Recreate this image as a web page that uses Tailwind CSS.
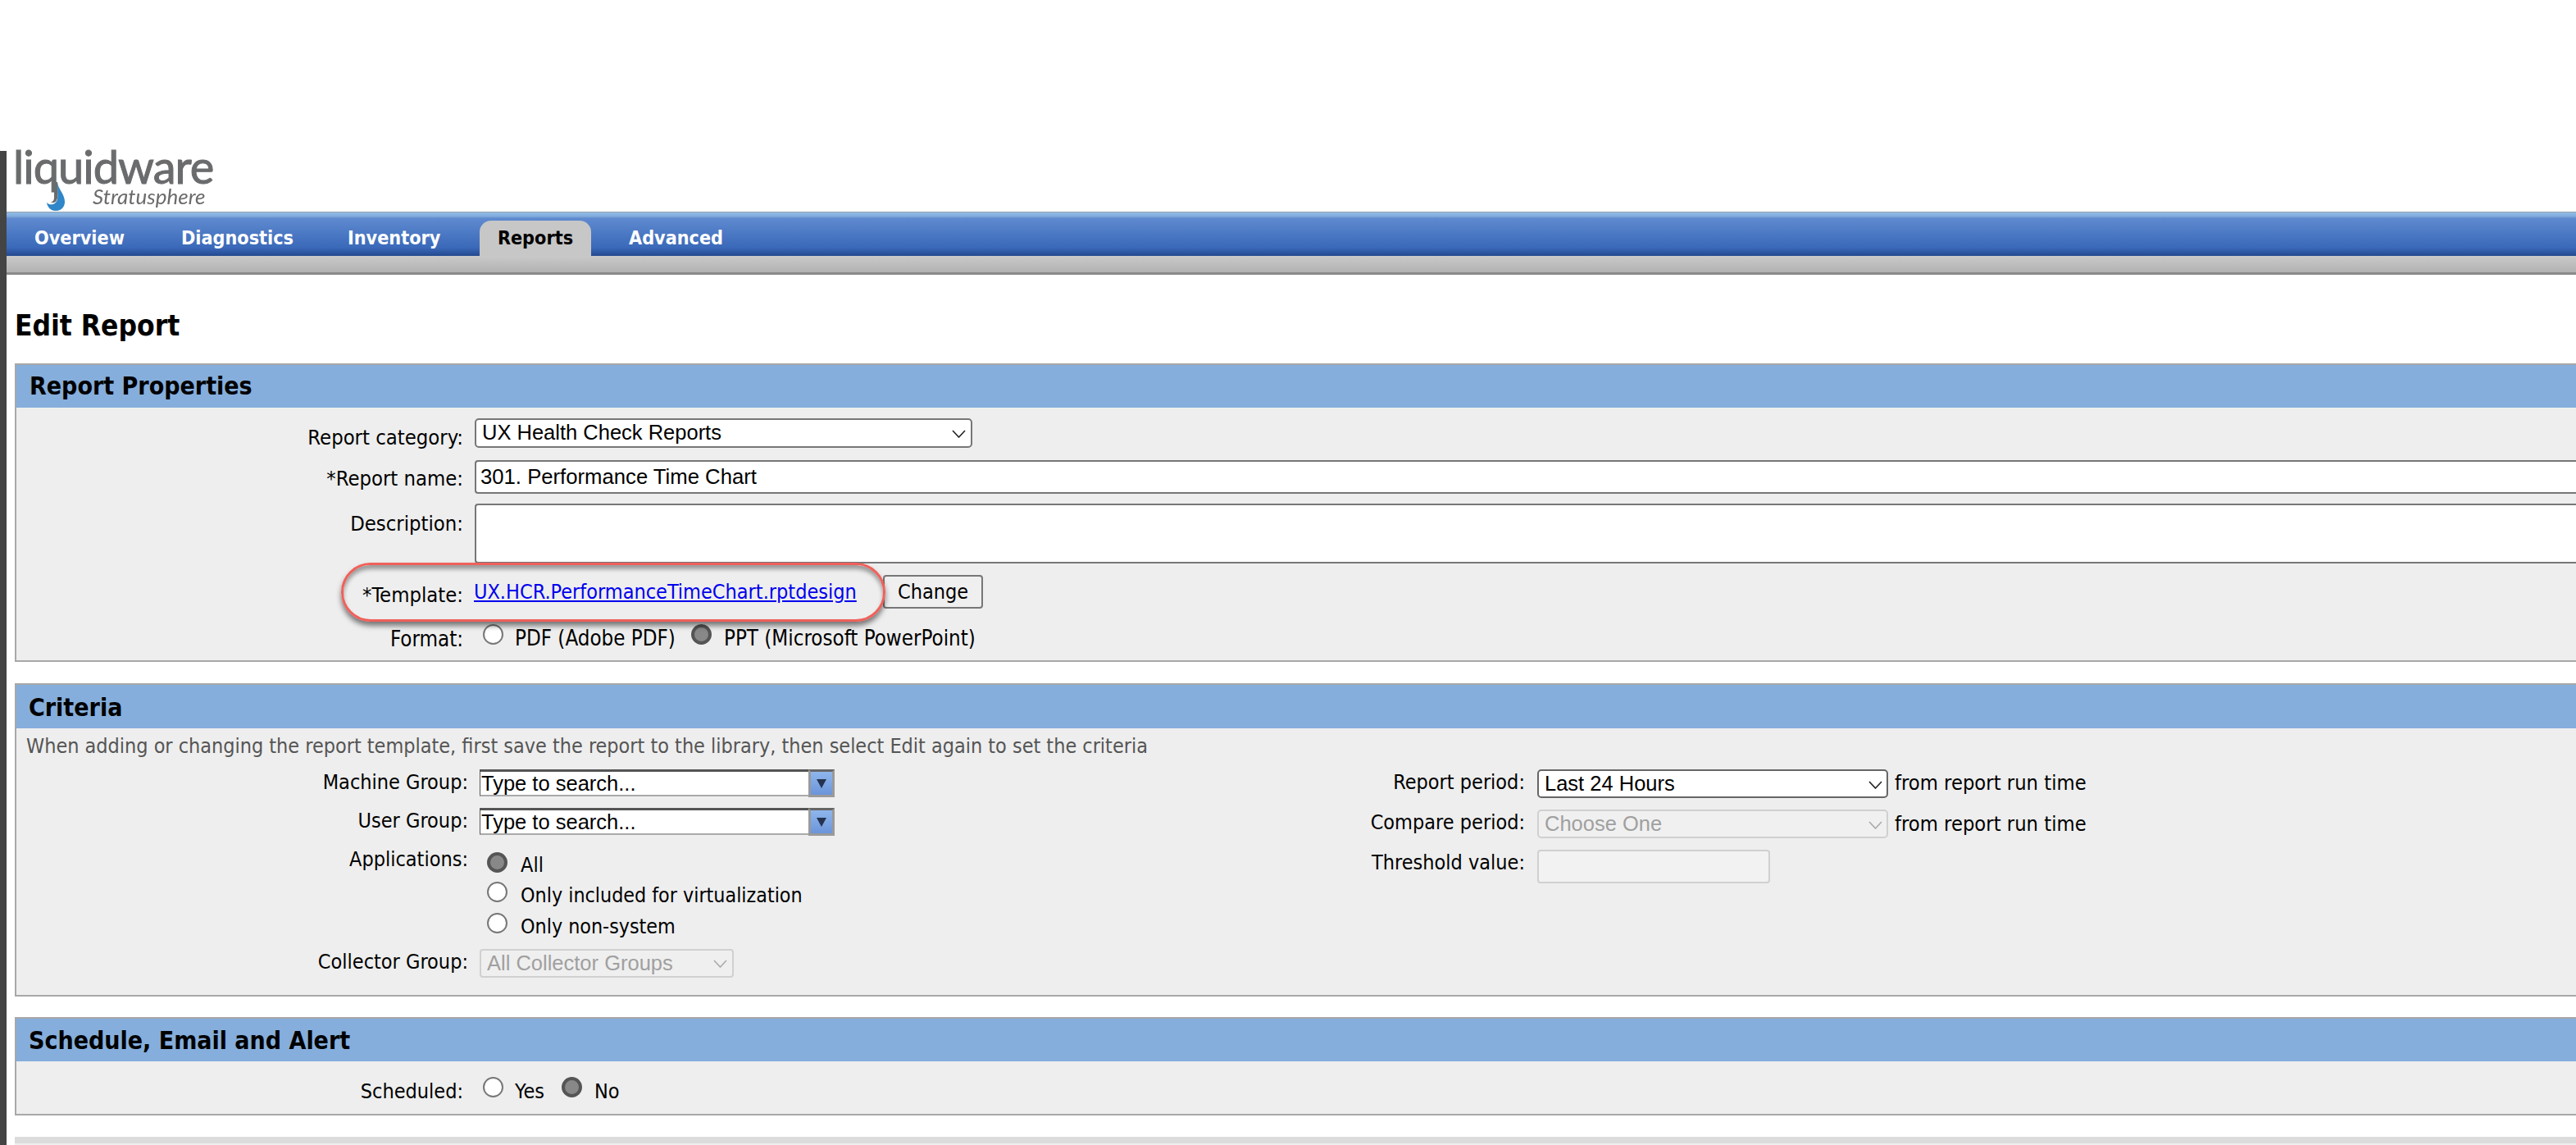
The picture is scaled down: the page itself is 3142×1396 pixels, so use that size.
<!doctype html>
<html><head><meta charset="utf-8"><script src="https://cdn.jsdelivr.net/npm/@tailwindcss/browser@4"></script></head>
<body class="bg-white overflow-hidden">
<div class="relative h-[1396px] w-[3142px] overflow-hidden font-['DejaVu_Sans_Condensed','DejaVu_Sans',sans-serif] text-[25px] text-black">
  <div class="pt-[184px] pl-[8px]">
    <div class="absolute left-0 top-[184px] bottom-0 w-[8px] bg-[#444]"></div>
    <header class="relative h-[74px] blur-[0.6px] text-[#6a6b6d]">
      <span class="absolute left-[8px] top-[-3px] font-['Lato',sans-serif] text-[56px] leading-[44px] tracking-[-1px] [-webkit-text-stroke:1px_#6a6b6d]">liquidware</span>
      <span class="absolute left-[105px] top-[42px] font-['Lato',sans-serif] italic text-[26px] leading-[26px]">Stratusphere</span>
      <svg class="absolute left-[47px] top-[37px]" width="26" height="37" viewBox="0 0 26 37"><path d="M11 1 L11 20 C11 24 8 26 5 26 L10 26 C14 26 17 22 15 1Z" fill="#6a6b6d"/><path d="M15 0 C15 9 24 15 24 25 C24 32 19 36 13 36 C7 36 3 32 2 26 C6 30 13 29 15 22 C16 16 15 8 15 0Z" fill="#2f86c8"/></svg>
    </header>
    <nav class="relative flex h-[54px] items-end bg-[linear-gradient(#9a9fa5_0,#8dbbe9_2px,#7fa9d8_6px,#5f8ad0_8px,#3a69b9_44px,#23498f_54px)] pl-[34px] text-[23.2px] font-bold text-white">
      <a class="mr-[69px] h-[43px] w-[110px] whitespace-nowrap leading-[42px]">Overview</a>
      <a class="mr-[69px] h-[43px] w-[134px] whitespace-nowrap leading-[42px]">Diagnostics</a>
      <a class="mr-[46px] h-[43px] w-[115px] whitespace-nowrap leading-[42px]">Inventory</a>
      <a class="mr-[46px] flex h-[43px] w-[136px] justify-center rounded-t-[14px] bg-[#c7c7c7] leading-[42px] text-black">Reports</a>
      <a class="h-[43px] leading-[42px]">Advanced</a>
    </nav>
    <div class="h-[23px] border-b-[3px] border-[#8a8a8a] bg-[linear-gradient(#c9c9c9,#b2b2b2)]"></div>
    <h1 class="ml-[10px] mt-[39px] h-[69px] text-[35px] font-bold leading-[46px]">Edit Report</h1>

    <section class="ml-[10px] h-[364px] border-y-[2px] border-l-[2px] border-[#a8a8a8] bg-[#eee]">
      <h2 class="h-[52px] bg-[#85aedc] pl-[16px] text-[30px] font-bold leading-[52px]">Report Properties</h2>
      <div class="relative text-[25.4px]">
        <div class="flex h-[64px] items-start pt-[13px]">
          <label class="mt-[8px] w-[545px] text-right leading-[30px]">Report category:</label>
          <div class="relative ml-[14px]"><select class="block h-[36px] w-[607px] appearance-none rounded-[5px] border-[2px] border-[#777] bg-white pb-[2px] pl-[7px] font-['Liberation_Sans',sans-serif] text-[25.5px] leading-[28px]"><option>UX Health Check Reports</option></select><svg class="absolute right-[8px] top-[14px]" width="17" height="10" viewBox="0 0 17 10"><path d="M1 1 L8.5 9 L16 1" fill="none" stroke="#222" stroke-width="1.6"/></svg></div>
        </div>
        <div class="flex h-[53px] items-start">
          <label class="mt-[7px] w-[545px] text-right leading-[30px]">*Report name:</label>
          <input class="ml-[14px] h-[41px] flex-1 rounded-l-[4px] border-y-[2px] border-l-[2px] border-[#777] bg-white pl-[5px] font-['Liberation_Sans',sans-serif] text-[25.7px]" value="301. Performance Time Chart">
        </div>
        <div class="flex h-[86px] items-start">
          <label class="mt-[9px] w-[545px] text-right leading-[30px]">Description:</label>
          <textarea class="ml-[14px] h-[73px] flex-1 resize-none rounded-l-[4px] border-y-[2px] border-l-[2px] border-[#777] bg-white"></textarea>
        </div>
        <div class="flex h-[61px] items-start">
          <label class="mt-[10px] w-[545px] text-right leading-[30px]">*Template:</label>
          <a class="ml-[13px] mt-[7px] w-[499px] text-[25px] leading-[30px] text-[#0000ee] underline">UX.HCR.PerformanceTimeChart.rptdesign</a>
          <button class="mt-[1px] h-[41px] w-[122px] rounded-[4px] border-[2px] border-[#777] bg-[#efefef] text-[25px]">Change</button>
        </div>
        <div class="flex h-[40px] items-start text-[25.7px]">
          <label class="mt-[3px] w-[545px] text-right leading-[30px]">Format:</label>
          <input type="radio" name="f" class="ml-[24px] size-[25px] appearance-none rounded-full border-[2px] border-[#777] bg-white">
          <span class="ml-[14px] mt-[2px] w-[215px] leading-[30px]">PDF (Adobe PDF)</span>
          <input type="radio" name="f" class="size-[25px] appearance-none rounded-full border-[4px] border-[#555] bg-[#888]">
          <span class="ml-[15px] mt-[2px] leading-[30px]">PPT (Microsoft PowerPoint)</span>
        </div>
        <div class="pointer-events-none absolute left-[396px] top-[189px] h-[72px] w-[664px] rounded-[36px] border-[3px] border-[#f0605a] shadow-[0_5px_6px_rgba(0,0,0,0.5),inset_0_5px_5px_rgba(0,0,0,0.35)]"></div>
      </div>
    </section>

    <section class="ml-[10px] mt-[26px] h-[382px] border-y-[2px] border-l-[2px] border-[#a8a8a8] bg-[#eee]">
      <h2 class="h-[53px] bg-[#85aedc] pl-[15px] text-[30px] font-bold leading-[55px]">Criteria</h2>
      <p class="ml-[12px] h-[50px] text-[24.95px] leading-[44px] text-[#555]">When adding or changing the report template, first save the report to the library, then select Edit again to set the criteria</p>
      <div class="flex">
        <div class="w-[1305px]">
          <div class="flex h-[47px] items-start">
            <label class="mt-[1px] w-[551px] text-right leading-[30px]">Machine Group:</label>
            <div class="ml-[14px] flex h-[34px] w-[433px]"><input class="h-[33px] flex-1 border-t-[3px] border-b-[2px] border-l border-[#555] border-b-[#aaa] bg-white pl-px font-['Liberation_Sans',sans-serif] text-[25.5px]" value="Type to search..."><span class="flex w-[32px] items-center justify-center border-[3px] border-[#9a9a9a] border-t-[#666] bg-[linear-gradient(#8fb6ec,#6b95da)]"><svg width="12" height="11" viewBox="0 0 12 11"><path d="M0 0 H12 L6 11Z" fill="#25334e"/></svg></span></div>
          </div>
          <div class="flex h-[54px] items-start">
            <label class="mt-[1px] w-[551px] text-right leading-[30px]">User Group:</label>
            <div class="ml-[14px] flex h-[34px] w-[433px]"><input class="h-[33px] flex-1 border-t-[3px] border-b-[2px] border-l border-[#555] border-b-[#aaa] bg-white pl-px font-['Liberation_Sans',sans-serif] text-[25.5px]" value="Type to search..."><span class="flex w-[32px] items-center justify-center border-[3px] border-[#9a9a9a] border-t-[#666] bg-[linear-gradient(#8fb6ec,#6b95da)]"><svg width="12" height="11" viewBox="0 0 12 11"><path d="M0 0 H12 L6 11Z" fill="#25334e"/></svg></span></div>
          </div>
          <div class="flex h-[36px] items-start">
            <label class="mt-[-6px] w-[551px] text-right leading-[30px]">Applications:</label>
            <input type="radio" name="a" class="ml-[23px] size-[25px] appearance-none rounded-full border-[4px] border-[#555] bg-[#888]">
            <span class="ml-[16px] mt-[1px] leading-[30px]">All</span>
          </div>
          <div class="flex h-[38px] items-start">
            <span class="w-[551px]"></span>
            <input type="radio" name="a" class="ml-[23px] size-[25px] appearance-none rounded-full border-[2px] border-[#777] bg-white">
            <span class="ml-[16px] mt-[2px] text-[24.8px] leading-[30px]">Only included for virtualization</span>
          </div>
          <div class="flex h-[44px] items-start">
            <span class="w-[551px]"></span>
            <input type="radio" name="a" class="ml-[23px] size-[25px] appearance-none rounded-full border-[2px] border-[#777] bg-white">
            <span class="ml-[16px] mt-[2px] text-[24.8px] leading-[30px]">Only non-system</span>
          </div>
          <div class="flex h-[35px] items-start">
            <label class="mt-[1px] w-[551px] text-right leading-[30px]">Collector Group:</label>
            <div class="relative ml-[14px]"><select disabled class="block h-[35px] w-[310px] appearance-none rounded-[4px] border-[2px] border-[#d0d0d0] bg-[#efefef] pb-[2px] pl-[7px] font-['Liberation_Sans',sans-serif] text-[25.5px] leading-[28px] text-[#a0a0a0]"><option>All Collector Groups</option></select><svg class="absolute right-[8px] top-[13px]" width="17" height="10" viewBox="0 0 17 10"><path d="M1 1 L8.5 9 L16 1" fill="none" stroke="#aaa" stroke-width="1.6"/></svg></div>
          </div>
        </div>
        <div class="flex-1">
          <div class="flex h-[49px] items-start">
            <label class="mt-[1px] w-[535px] text-right leading-[30px]">Report period:</label>
            <div class="relative ml-[15px]"><select class="block h-[35px] w-[428px] appearance-none rounded-[5px] border-[2px] border-[#666] bg-white pb-[2px] pl-[7px] font-['Liberation_Sans',sans-serif] text-[25.5px] leading-[28px]"><option>Last 24 Hours</option></select><svg class="absolute right-[7px] top-[14px]" width="17" height="10" viewBox="0 0 17 10"><path d="M1 1 L8.5 9 L16 1" fill="none" stroke="#222" stroke-width="1.6"/></svg></div>
            <span class="ml-[8px] text-[25.3px] leading-[34px]">from report run time</span>
          </div>
          <div class="flex h-[49px] items-start">
            <label class="mt-[1px] w-[535px] text-right leading-[30px]">Compare period:</label>
            <div class="relative ml-[15px]"><select disabled class="block h-[35px] w-[428px] appearance-none rounded-[5px] border-[2px] border-[#d0d0d0] bg-[#f0f0f0] pb-[2px] pl-[7px] font-['Liberation_Sans',sans-serif] text-[25.5px] leading-[28px] text-[#a0a0a0]"><option>Choose One</option></select><svg class="absolute right-[7px] top-[14px]" width="17" height="10" viewBox="0 0 17 10"><path d="M1 1 L8.5 9 L16 1" fill="none" stroke="#aaa" stroke-width="1.6"/></svg></div>
            <span class="ml-[8px] mt-[1px] text-[25.3px] leading-[34px]">from report run time</span>
          </div>
          <div class="flex items-start">
            <label class="mt-[1px] w-[535px] text-right leading-[30px]">Threshold value:</label>
            <input disabled class="ml-[15px] h-[41px] w-[284px] rounded-[4px] border-[2px] border-[#d0d0d0] bg-[#f2f2f2]">
          </div>
        </div>
      </div>
    </section>

    <section class="ml-[10px] mt-[25px] h-[120px] border-y-[2px] border-l-[2px] border-[#a8a8a8] bg-[#eee]">
      <h2 class="h-[52px] bg-[#85aedc] pl-[15px] text-[30px] font-bold leading-[54px]">Schedule, Email and Alert</h2>
      <div class="flex items-start pt-[19px]">
        <label class="mt-[3px] w-[545px] text-right leading-[30px]">Scheduled:</label>
        <input type="radio" name="s" class="ml-[24px] size-[25px] appearance-none rounded-full border-[2px] border-[#777] bg-white">
        <span class="ml-[14px] mt-[3px] w-[57px] leading-[30px]">Yes</span>
        <input type="radio" name="s" class="size-[25px] appearance-none rounded-full border-[4px] border-[#555] bg-[#888]">
        <span class="ml-[15px] mt-[3px] leading-[30px]">No</span>
      </div>
    </section>
    <div class="ml-[10px] mt-[26px] h-[20px] border-t-[8px] border-[#dcdcdc] bg-[#eee]"></div>
  </div>
</div>
</body></html>
